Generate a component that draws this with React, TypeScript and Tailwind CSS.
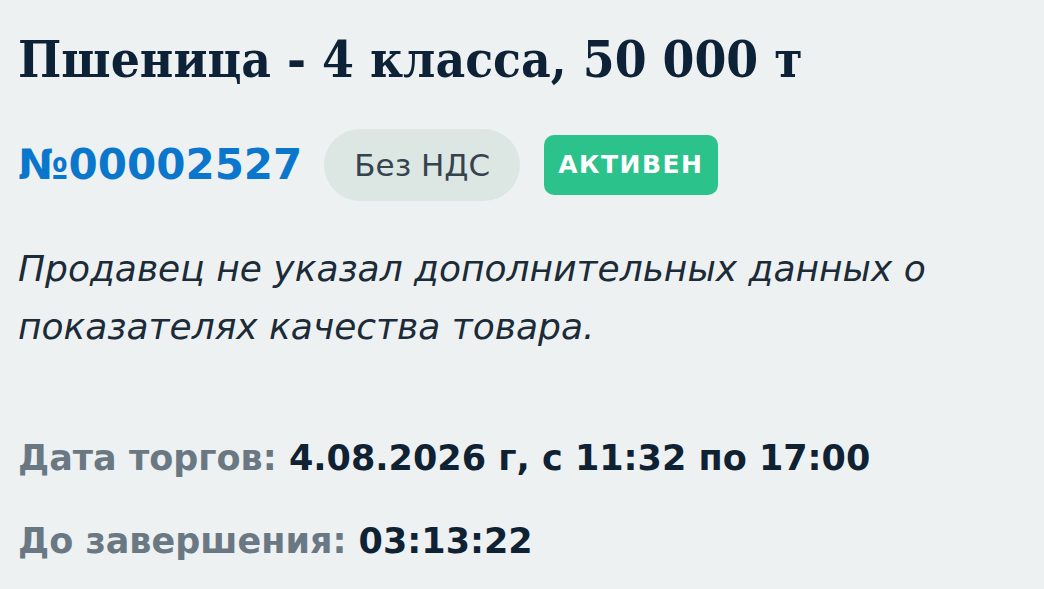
import React from "react";

const SANS = "font-['DejaVu_Sans','Open_Sans',sans-serif]";

const LotHeader = () => {
    return <div className="flex flex-col">
        <h1 className="font-['DejaVu_Serif_Condensed','DejaVu_Serif',serif] font-bold text-[51px] leading-[60px] text-[#0d2236]">
            Пшеница - 4 класса, 50 000 т
        </h1>
        <div className="flex flex-row items-center mt-[40px]">
            <span className={`${SANS} font-bold text-[42px] leading-none text-[#0a77cc]`}>№00002527</span>
            <span className={`${SANS} ml-[22px] h-[72px] px-[30px] rounded-full bg-[#dce7e3] text-[#36434e] text-[31px] flex items-center`}>
                Без НДС
            </span>
            <span className={`${SANS} ml-[24px] h-[60px] px-[14px] rounded-[10px] bg-[#2bc38b] text-white text-[25px] font-bold tracking-[0.06em] flex items-center`}>
                АКТИВЕН
            </span>
        </div>
    </div>
}

const App = () => {
    return <div className="w-[1044px] h-[589px] bg-[#eef1f1] overflow-hidden px-[18px] pt-[29px]">
        <LotHeader />
        <p className={`${SANS} italic text-[36px] leading-[58px] text-[#1b2b38] mt-[39px]`}>
            Продавец не указал дополнительных данных о<br />показателях качества товара.
        </p>
        <div className={`${SANS} font-bold text-[35px] leading-[44px] mt-[80px] text-[#0f2234]`}>
            <div><span className="text-[#6a7883]">Дата торгов:</span> 4.08.2026 г, с 11:32 по 17:00</div>
            <div className="mt-[39px]"><span className="text-[#6a7883]">До завершения:</span> 03:13:22</div>
        </div>
    </div>
}

export default App;
